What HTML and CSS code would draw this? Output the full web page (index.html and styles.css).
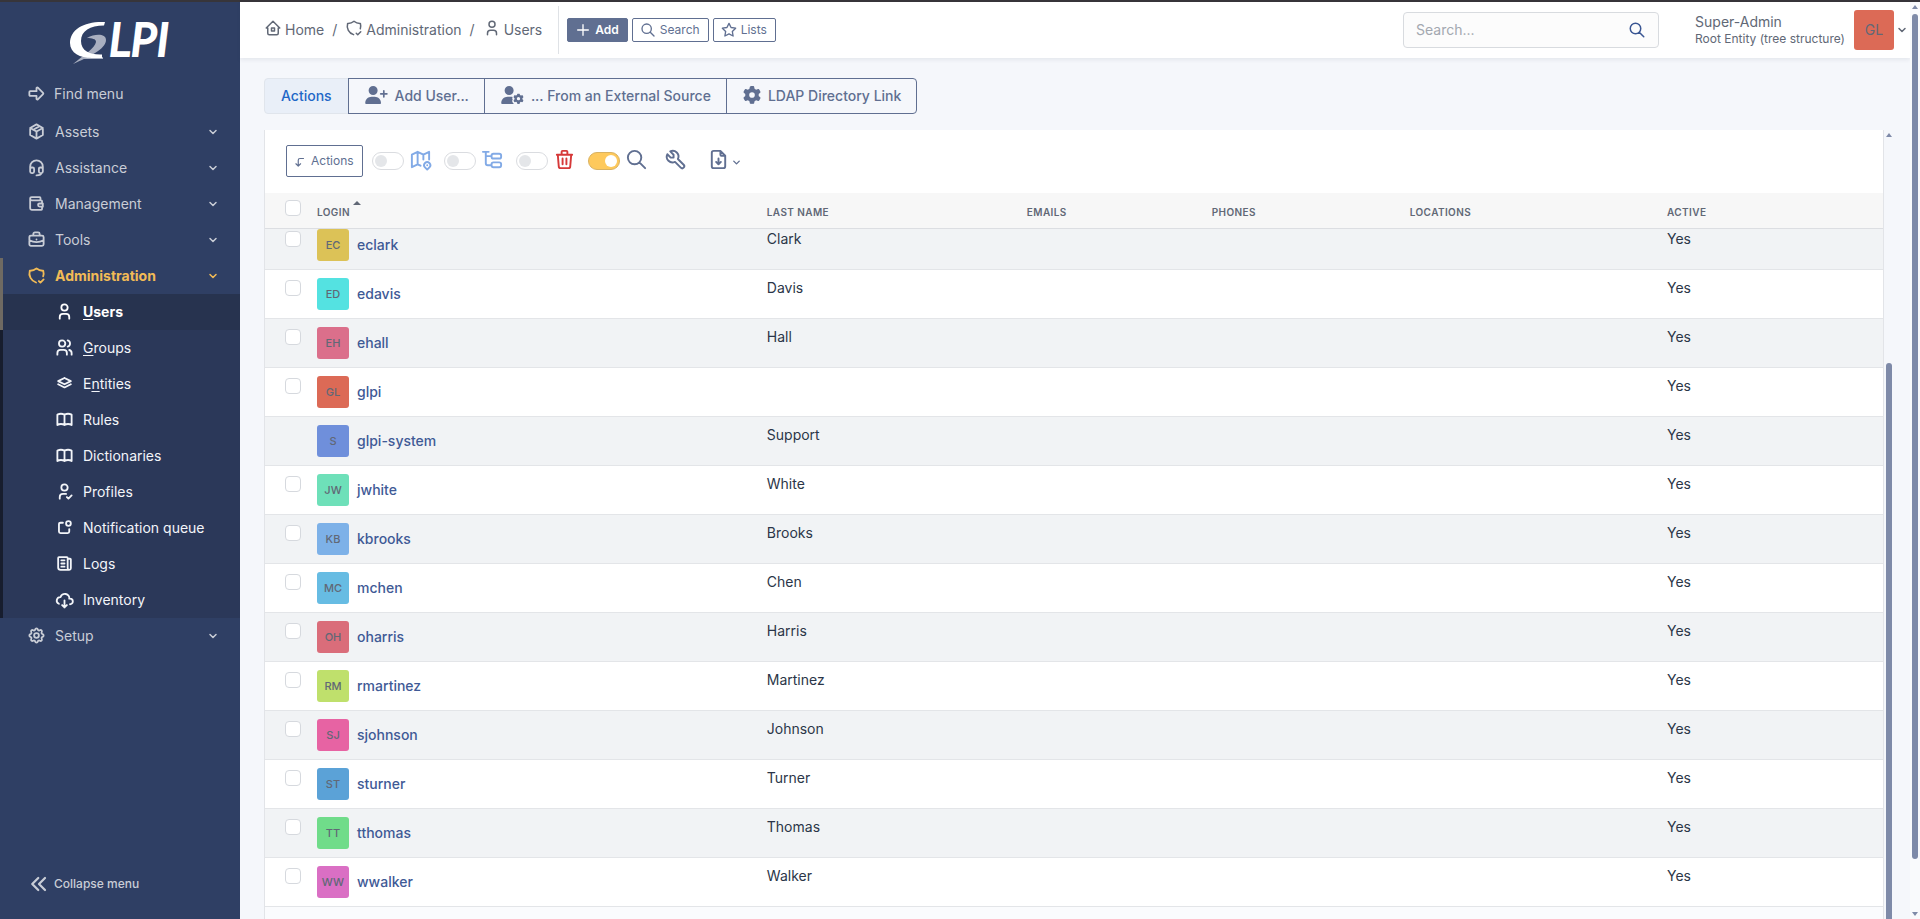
FILE: index.html
```html
<!DOCTYPE html>
<html lang="en">
<head>
<meta charset="utf-8">
<title>Users - GLPI</title>
<link rel="stylesheet" href="styles.css">
</head>
<body>
<svg class="sprite" aria-hidden="true">
  <symbol id="i-arrow" viewBox="0 0 24 24"><path d="M4 9h8v-3.586a1 1 0 0 1 1.707 -.707l6.586 6.586a1 1 0 0 1 0 1.414l-6.586 6.586a1 1 0 0 1 -1.707 -.707v-3.586h-8a1 1 0 0 1 -1 -1v-4a1 1 0 0 1 1 -1z"/></symbol>
  <symbol id="i-package" viewBox="0 0 24 24"><path d="M12 3l8 4.5v9l-8 4.5l-8 -4.5v-9l8 -4.5M12 12l8 -4.5M12 12v9M12 12l-8 -4.5M16 5.25l-8 4.5"/></symbol>
  <symbol id="i-headset" viewBox="0 0 24 24"><path d="M4 14v-3a8 8 0 1 1 16 0v3M18 19c0 1.657 -2.686 3 -6 3M4 14a2 2 0 0 1 2 -2h1a2 2 0 0 1 2 2v3a2 2 0 0 1 -2 2h-1a2 2 0 0 1 -2 -2v-3zM15 14a2 2 0 0 1 2 -2h1a2 2 0 0 1 2 2v3a2 2 0 0 1 -2 2h-1a2 2 0 0 1 -2 -2v-3z"/></symbol>
  <symbol id="i-wallet" viewBox="0 0 24 24"><path d="M17 8v-3a1 1 0 0 0 -1 -1h-10a2 2 0 0 0 0 4h12a1 1 0 0 1 1 1v3m0 4v3a1 1 0 0 1 -1 1h-12a2 2 0 0 1 -2 -2v-12M20 12v4h-4a2 2 0 0 1 0 -4h4"/></symbol>
  <symbol id="i-briefcase" viewBox="0 0 24 24"><path d="M3 9a2 2 0 0 1 2 -2h14a2 2 0 0 1 2 2v9a2 2 0 0 1 -2 2h-14a2 2 0 0 1 -2 -2zM8 7v-2a2 2 0 0 1 2 -2h4a2 2 0 0 1 2 2v2M12 12v.01M3 13a20 20 0 0 0 18 0"/></symbol>
  <symbol id="i-shield" viewBox="0 0 24 24"><path d="M11.46 20.846a12 12 0 0 1 -7.96 -14.846a12 12 0 0 0 8.5 -3a12 12 0 0 0 8.5 3a12 12 0 0 1 -.09 7.06M15 19l2 2l4 -4"/></symbol>
  <symbol id="i-user" viewBox="0 0 24 24"><path d="M8 7a4 4 0 1 0 8 0a4 4 0 0 0 -8 0M6 21v-2a4 4 0 0 1 4 -4h4a4 4 0 0 1 4 4v2"/></symbol>
  <symbol id="i-users" viewBox="0 0 24 24"><path d="M5 7a4 4 0 1 0 8 0a4 4 0 1 0 -8 0M3 21v-2a4 4 0 0 1 4 -4h4a4 4 0 0 1 4 4v2M16 3.13a4 4 0 0 1 0 7.75M21 21v-2a4 4 0 0 0 -3 -3.85"/></symbol>
  <symbol id="i-stack" viewBox="0 0 24 24"><path d="M12 5l-8 4l8 4l8 -4l-8 -4M4 13l8 4l8 -4"/></symbol>
  <symbol id="i-book" viewBox="0 0 24 24"><path d="M3 19a9 9 0 0 1 9 0a9 9 0 0 1 9 0M3 6a9 9 0 0 1 9 0a9 9 0 0 1 9 0M3 6v13M12 6v13M21 6v13"/></symbol>
  <symbol id="i-usercheck" viewBox="0 0 24 24"><path d="M8 7a4 4 0 1 0 8 0a4 4 0 0 0 -8 0M6 21v-2a4 4 0 0 1 4 -4h4M15 19l2 2l4 -4"/></symbol>
  <symbol id="i-notification" viewBox="0 0 24 24"><path d="M10 6h-3a2 2 0 0 0 -2 2v9a2 2 0 0 0 2 2h9a2 2 0 0 0 2 -2v-3M14 7a3 3 0 1 0 6 0a3 3 0 1 0 -6 0"/></symbol>
  <symbol id="i-news" viewBox="0 0 24 24"><path d="M16 6h3a1 1 0 0 1 1 1v11a2 2 0 0 1 -4 0v-13a1 1 0 0 0 -1 -1h-10a1 1 0 0 0 -1 1v12a3 3 0 0 0 3 3h11M8 8h4M8 12h4M8 16h4"/></symbol>
  <symbol id="i-cloud" viewBox="0 0 24 24"><path d="M19 18a3.5 3.5 0 0 0 0 -7h-1a5 4.5 0 0 0 -11 -2a4.6 4.4 0 0 0 -2.1 8.4M12 13v9M9 19l3 3l3 -3"/></symbol>
  <symbol id="i-settings" viewBox="0 0 24 24"><path d="M10.325 4.317c.426 -1.756 2.924 -1.756 3.35 0a1.724 1.724 0 0 0 2.573 1.066c1.543 -.94 3.31 .826 2.37 2.37a1.724 1.724 0 0 0 1.065 2.572c1.756 .426 1.756 2.924 0 3.35a1.724 1.724 0 0 0 -1.066 2.573c.94 1.543 -.826 3.31 -2.37 2.37a1.724 1.724 0 0 0 -2.572 1.065c-.426 1.756 -2.924 1.756 -3.35 0a1.724 1.724 0 0 0 -2.573 -1.066c-1.543 .94 -3.31 -.826 -2.37 -2.37a1.724 1.724 0 0 0 -1.065 -2.572c-1.756 -.426 -1.756 -2.924 0 -3.35a1.724 1.724 0 0 0 1.066 -2.573c-.94 -1.543 .826 -3.31 2.37 -2.37c1 .608 2.296 .07 2.572 -1.065zM9 12a3 3 0 1 0 6 0a3 3 0 0 0 -6 0"/></symbol>
  <symbol id="i-chevron" viewBox="0 0 24 24"><path d="M6 9l6 6l6 -6"/></symbol>
  <symbol id="i-collapse" viewBox="0 0 24 24"><path d="M11 4l-8 8l8 8M20 4l-8 8l8 8"/></symbol>
  <symbol id="i-home" viewBox="0 0 24 24"><path d="M5 12h-2l9 -9l9 9h-2v7a2 2 0 0 1 -2 2h-10a2 2 0 0 1 -2 -2v-7M10 12h4v4h-4z"/></symbol>
  <symbol id="i-plus" viewBox="0 0 24 24"><path d="M12 4v16M4 12h16"/></symbol>
  <symbol id="i-search" viewBox="0 0 24 24"><path d="M3 10a7 7 0 1 0 14 0a7 7 0 1 0 -14 0M21 21l-6 -6"/></symbol>
  <symbol id="i-star" viewBox="0 0 24 24"><path d="M12 17.75l-6.172 3.245l1.179 -6.873l-5 -4.867l6.9 -1l3.086 -6.253l3.086 6.253l6.9 1l-5 4.867l1.179 6.873z"/></symbol>
  <symbol id="i-cornerdown" viewBox="0 0 24 24"><path d="M18 6h-6a3 3 0 0 0 -3 3v10l-4 -4m8 0l-4 4"/></symbol>
  <symbol id="i-map" viewBox="0 0 24 24"><path d="M12 18.5l-3 -1.5l-6 3v-13l6 -3l6 3l6 -3v8M9 4v13M15 7v5M19 22.5l-2.3 -2.3a3.2 3.2 0 1 1 4.6 0zM19 18v.01"/></symbol>
  <symbol id="i-tree" viewBox="0 0 24 24"><path d="M2 4h6M5 4v12a2 2 0 0 0 2 2h4M5 8.5h6M11 8a2 2 0 0 1 2 -2h6a2 2 0 0 1 2 2v1a2 2 0 0 1 -2 2h-6a2 2 0 0 1 -2 -2zM11 17a2 2 0 0 1 2 -2h6a2 2 0 0 1 2 2v1a2 2 0 0 1 -2 2h-6a2 2 0 0 1 -2 -2z"/></symbol>
  <symbol id="i-trash" viewBox="0 0 24 24"><path d="M4 7h16M10 11v6M14 11v6M5 7l1 12a2 2 0 0 0 2 2h8a2 2 0 0 0 2 -2l1 -12M9 7v-3a1 1 0 0 1 1 -1h4a1 1 0 0 1 1 1v3"/></symbol>
  <symbol id="i-tool" viewBox="0 0 24 24"><path d="M7 10h3v-3l-3.5 -3.5a6 6 0 0 1 8 8l6 6a2 2 0 0 1 -3 3l-6 -6a6 6 0 0 1 -8 -8l3.5 3.5"/></symbol>
  <symbol id="i-file" viewBox="0 0 24 24"><path d="M14 3v4a1 1 0 0 0 1 1h4M17 21h-10a2 2 0 0 1 -2 -2v-14a2 2 0 0 1 2 -2h7l5 5v11a2 2 0 0 1 -2 2zM12 11v6M9.5 14.5l2.5 2.5l2.5 -2.5"/></symbol>
  <symbol id="i-gear" viewBox="0 0 512 512"><path d="M495.9 166.6c3.2 8.7 .5 18.4-6.4 24.6l-43.3 39.4c1.1 8.3 1.7 16.8 1.7 25.4s-.6 17.1-1.7 25.4l43.3 39.4c6.9 6.2 9.6 15.9 6.4 24.6c-4.4 11.9-9.7 23.3-15.8 34.3l-4.7 8.1c-6.6 11-14 21.4-22.1 31.2c-5.9 7.2-15.7 9.6-24.5 6.8l-55.7-17.7c-13.4 10.3-28.2 18.9-44 25.4l-12.5 57.1c-2 9.1-9 16.3-18.2 17.8c-13.8 2.3-28 3.5-42.5 3.5s-28.7-1.2-42.5-3.5c-9.2-1.5-16.2-8.7-18.2-17.8l-12.5-57.1c-15.8-6.5-30.6-15.1-44-25.4L83.1 425.9c-8.8 2.8-18.6 .3-24.5-6.8c-8.1-9.8-15.5-20.2-22.1-31.2l-4.7-8.1c-6.1-11-11.4-22.4-15.8-34.3c-3.2-8.7-.5-18.4 6.4-24.6l43.3-39.4C64.6 273.1 64 264.6 64 256s.6-17.1 1.7-25.4L22.4 191.2c-6.9-6.2-9.6-15.9-6.4-24.6c4.4-11.9 9.7-23.3 15.8-34.3l4.7-8.1c6.6-11 14-21.4 22.1-31.2c5.9-7.2 15.7-9.6 24.5-6.8l55.7 17.7c13.4-10.3 28.2-18.9 44-25.4l12.5-57.1c2-9.1 9-16.3 18.2-17.8C227.3 1.2 241.5 0 256 0s28.7 1.2 42.5 3.5c9.2 1.5 16.2 8.7 18.2 17.8l12.5 57.1c15.8 6.5 30.6 15.1 44 25.4l55.7-17.7c8.8-2.8 18.6-.3 24.5 6.8c8.1 9.8 15.5 20.2 22.1 31.2l4.7 8.1c6.1 11 11.4 22.4 15.8 34.3zM256 336a80 80 0 1 0 0-160 80 80 0 1 0 0 160z"/></symbol>
  <symbol id="i-userplus" viewBox="0 0 640 512"><path d="M96 128a128 128 0 1 1 256 0A128 128 0 1 1 96 128zM0 482.3C0 383.8 79.8 304 178.3 304h91.4C368.2 304 448 383.8 448 482.3c0 16.4-13.3 29.7-29.7 29.7H29.7C13.3 512 0 498.7 0 482.3zM504 312V248H440c-13.3 0-24-10.7-24-24s10.7-24 24-24h64V136c0-13.3 10.7-24 24-24s24 10.7 24 24v64h64c13.3 0 24 10.7 24 24s-10.7 24-24 24H552v64c0 13.3-10.7 24-24 24s-24-10.7-24-24z"/></symbol>
  <symbol id="i-usergear" viewBox="0 0 640 512"><path d="M96 128a128 128 0 1 1 256 0A128 128 0 1 1 96 128zM0 482.3C0 383.8 79.8 304 178.3 304h91.4c20 0 39 3 57 9c-20 25-20 45 0 65c-30 50-10 95 35 134H29.7C13.3 512 0 498.7 0 482.3z"/><use href="#i-gear" x="340" y="212" width="300" height="300"/></symbol>
</svg>

<div class="topline"></div>
<div class="app">
  <aside class="sidebar">
    <a class="logo" href="#" aria-label="GLPI">
      <svg viewBox="0 -12 124 66" width="124" height="66">
        <path class="swoosh" d="M18 17C26 12.5 37 12.5 37 19C37 28 20 36 4 43C15 34 26 27 27 21C27 17.5 23 17.5 18 17zM15 35C22 37.5 28 37.5 34 36V38H15z"/>
        <path class="g" d="M36 1C16 0 1 8 1 22C1 32 11 37 23 37H33V33.5C21 34 12 30 12 20C12 10 21 4.5 35 4.5z"/>
        <text x="40" y="35">LPI</text>
      </svg>
    </a>
    <nav class="menu">
      <a class="item find" href="#"><svg class="icon"><use href="#i-arrow"/></svg><span>Find menu</span></a>
      <a class="item" href="#"><svg class="icon"><use href="#i-package"/></svg><span>Assets</span><svg class="icon chev"><use href="#i-chevron"/></svg></a>
      <a class="item" href="#"><svg class="icon"><use href="#i-headset"/></svg><span>Assistance</span><svg class="icon chev"><use href="#i-chevron"/></svg></a>
      <a class="item" href="#"><svg class="icon"><use href="#i-wallet"/></svg><span>Management</span><svg class="icon chev"><use href="#i-chevron"/></svg></a>
      <a class="item" href="#"><svg class="icon"><use href="#i-briefcase"/></svg><span>Tools</span><svg class="icon chev"><use href="#i-chevron"/></svg></a>
      <a class="item current" href="#"><svg class="icon"><use href="#i-shield"/></svg><span>Administration</span><svg class="icon chev"><use href="#i-chevron"/></svg></a>
      <div class="submenu">
        <a class="sub active" href="#"><svg class="icon"><use href="#i-user"/></svg><span><u>U</u>sers</span></a>
        <a class="sub" href="#"><svg class="icon"><use href="#i-users"/></svg><span><u>G</u>roups</span></a>
        <a class="sub" href="#"><svg class="icon"><use href="#i-stack"/></svg><span>E<u>n</u>tities</span></a>
        <a class="sub" href="#"><svg class="icon"><use href="#i-book"/></svg><span>Rules</span></a>
        <a class="sub" href="#"><svg class="icon"><use href="#i-book"/></svg><span>Dictionaries</span></a>
        <a class="sub" href="#"><svg class="icon"><use href="#i-usercheck"/></svg><span>Profiles</span></a>
        <a class="sub" href="#"><svg class="icon"><use href="#i-notification"/></svg><span>Notification queue</span></a>
        <a class="sub" href="#"><svg class="icon"><use href="#i-news"/></svg><span>Logs</span></a>
        <a class="sub" href="#"><svg class="icon"><use href="#i-cloud"/></svg><span>Inventory</span></a>
      </div>
      <a class="item" href="#"><svg class="icon"><use href="#i-settings"/></svg><span>Setup</span><svg class="icon chev"><use href="#i-chevron"/></svg></a>
    </nav>
    <button class="collapse" type="button"><svg class="icon"><use href="#i-collapse"/></svg><span>Collapse menu</span></button>
  </aside>

  <div class="page">
    <header class="header">
      <nav class="crumbs" aria-label="Breadcrumb">
        <a href="#"><svg class="icon"><use href="#i-home"/></svg>Home</a>
        <span>/</span>
        <a href="#"><svg class="icon"><use href="#i-shield"/></svg>Administration</a>
        <span>/</span>
        <a href="#"><svg class="icon"><use href="#i-user"/></svg>Users</a>
      </nav>
      <div class="quick">
        <button class="btn primary" type="button"><svg class="icon"><use href="#i-plus"/></svg>Add</button>
        <button class="btn" type="button"><svg class="icon"><use href="#i-search"/></svg>Search</button>
        <button class="btn" type="button"><svg class="icon"><use href="#i-star"/></svg>Lists</button>
      </div>
      <form class="search">
        <input type="text" placeholder="Search..." aria-label="Search">
        <button type="button" aria-label="Search"><svg class="icon"><use href="#i-search"/></svg></button>
      </form>
      <button class="account" type="button">
        <span class="who"><span class="profile">Super-Admin</span><span class="entity">Root Entity (tree structure)</span></span>
        <span class="avatar large">GL</span>
        <svg class="icon chev"><use href="#i-chevron"/></svg>
      </button>
    </header>

    <main class="content">
      <div class="tabs">
        <span class="tab label">Actions</span>
        <a class="tab" href="#"><svg class="solid wide"><use href="#i-userplus"/></svg>Add User...</a>
        <a class="tab" href="#"><svg class="solid wide"><use href="#i-usergear"/></svg>... From an External Source</a>
        <a class="tab" href="#"><svg class="solid"><use href="#i-gear"/></svg>LDAP Directory Link</a>
      </div>

      <div class="results">
        <section class="card">
          <div class="toolbar">
            <button class="btn actions" type="button"><svg class="icon"><use href="#i-cornerdown"/></svg>Actions</button>
            <label class="toggle blue"><input type="checkbox" aria-label="Show as map"><svg class="icon"><use href="#i-map"/></svg></label>
            <label class="toggle blue"><input type="checkbox" aria-label="Browse"><svg class="icon"><use href="#i-tree"/></svg></label>
            <label class="toggle red"><input type="checkbox" aria-label="Show the trashbin"><svg class="icon"><use href="#i-trash"/></svg></label>
            <label class="toggle"><input type="checkbox" aria-label="Search" checked><svg class="icon"><use href="#i-search"/></svg></label>
            <button class="tool" type="button" aria-label="Columns"><svg class="icon"><use href="#i-tool"/></svg></button>
            <button class="tool" type="button" aria-label="Export"><svg class="icon"><use href="#i-file"/></svg><svg class="icon chev"><use href="#i-chevron"/></svg></button>
          </div>
          <table class="users">
            <colgroup><col class="c-check"><col class="c-login"><col class="c-name"><col class="c-mail"><col class="c-phone"><col class="c-loc"><col></colgroup>
            <thead>
              <tr><th><input class="check" type="checkbox" aria-label="Check all"></th><th class="sorted">Login<svg class="sort" viewBox="0 0 8 4"><path d="M4 0L8 4H0z"/></svg></th><th>Last name</th><th>Emails</th><th>Phones</th><th>Locations</th><th>Active</th></tr>
            </thead>
            <tbody>
              <tr><td><input class="check" type="checkbox" aria-label="eclark"></td><td><a href="#"><span class="avatar" style="background:#dcc257">EC</span>eclark</a></td><td>Clark</td><td></td><td></td><td></td><td>Yes</td></tr>
              <tr><td><input class="check" type="checkbox" aria-label="edavis"></td><td><a href="#"><span class="avatar" style="background:#54e2e1">ED</span>edavis</a></td><td>Davis</td><td></td><td></td><td></td><td>Yes</td></tr>
              <tr><td><input class="check" type="checkbox" aria-label="ehall"></td><td><a href="#"><span class="avatar" style="background:#db6f8b">EH</span>ehall</a></td><td>Hall</td><td></td><td></td><td></td><td>Yes</td></tr>
              <tr><td><input class="check" type="checkbox" aria-label="glpi"></td><td><a href="#"><span class="avatar" style="background:#dc6a56">GL</span>glpi</a></td><td></td><td></td><td></td><td></td><td>Yes</td></tr>
              <tr><td></td><td><a href="#"><span class="avatar" style="background:#6f8fdb">S</span>glpi-system</a></td><td>Support</td><td></td><td></td><td></td><td>Yes</td></tr>
              <tr><td><input class="check" type="checkbox" aria-label="jwhite"></td><td><a href="#"><span class="avatar" style="background:#6ee0b9">JW</span>jwhite</a></td><td>White</td><td></td><td></td><td></td><td>Yes</td></tr>
              <tr><td><input class="check" type="checkbox" aria-label="kbrooks"></td><td><a href="#"><span class="avatar" style="background:#7db1e8">KB</span>kbrooks</a></td><td>Brooks</td><td></td><td></td><td></td><td>Yes</td></tr>
              <tr><td><input class="check" type="checkbox" aria-label="mchen"></td><td><a href="#"><span class="avatar" style="background:#67bce3">MC</span>mchen</a></td><td>Chen</td><td></td><td></td><td></td><td>Yes</td></tr>
              <tr><td><input class="check" type="checkbox" aria-label="oharris"></td><td><a href="#"><span class="avatar" style="background:#da6d7a">OH</span>oharris</a></td><td>Harris</td><td></td><td></td><td></td><td>Yes</td></tr>
              <tr><td><input class="check" type="checkbox" aria-label="rmartinez"></td><td><a href="#"><span class="avatar" style="background:#bfe06c">RM</span>rmartinez</a></td><td>Martinez</td><td></td><td></td><td></td><td>Yes</td></tr>
              <tr><td><input class="check" type="checkbox" aria-label="sjohnson"></td><td><a href="#"><span class="avatar" style="background:#e763a3">SJ</span>sjohnson</a></td><td>Johnson</td><td></td><td></td><td></td><td>Yes</td></tr>
              <tr><td><input class="check" type="checkbox" aria-label="sturner"></td><td><a href="#"><span class="avatar" style="background:#5ba2d7">ST</span>sturner</a></td><td>Turner</td><td></td><td></td><td></td><td>Yes</td></tr>
              <tr><td><input class="check" type="checkbox" aria-label="tthomas"></td><td><a href="#"><span class="avatar" style="background:#70dc8a">TT</span>tthomas</a></td><td>Thomas</td><td></td><td></td><td></td><td>Yes</td></tr>
              <tr><td><input class="check" type="checkbox" aria-label="wwalker"></td><td><a href="#"><span class="avatar" style="background:#da6fc4">WW</span>wwalker</a></td><td>Walker</td><td></td><td></td><td></td><td>Yes</td></tr>
            </tbody>
          </table>
          <div class="card-foot"></div>
        </section>
        <div class="scroll inner"><svg class="tri" viewBox="0 0 6 4"><path d="M3 0L6 4H0z"/></svg><span class="thumb"></span></div>
      </div>
    </main>
  </div>
  <div class="scroll outer"><svg class="tri" viewBox="0 0 6 4"><path d="M3 0L6 4H0z"/></svg><span class="thumb"></span><svg class="tri" viewBox="0 0 6 4"><path d="M0 0H6L3 4z"/></svg></div>
</div>
</body>
</html>
```
FILE: styles.css
```css
* { box-sizing: border-box; }

body {
  margin: 0;
  height: 100vh;
  overflow: hidden;
  display: flex;
  flex-direction: column;
  background: #f5f7fb;
  color: #2b3648;
  font: 14px/20px Inter, "Liberation Sans", sans-serif;
}

a { color: inherit; text-decoration: none; }
button { font: inherit; color: inherit; background: none; border: 0; padding: 0; }

.sprite { position: absolute; width: 0; height: 0; }
.topline { flex: none; height: 2px; background: #37353a; }
.app { flex: 1; min-height: 0; display: flex; }

.icon {
  flex: none;
  width: 18px;
  height: 18px;
  fill: none;
  stroke: currentColor;
  stroke-width: 2;
  stroke-linecap: round;
  stroke-linejoin: round;
}
.solid { flex: none; width: 18px; height: 18px; fill: currentColor; }
.solid.wide { width: 23px; }
.icon.chev { width: 12px; height: 12px; stroke-width: 3; }

/* Sidebar */
.sidebar {
  flex: none;
  width: 240px;
  display: flex;
  flex-direction: column;
  background: #2f3f64;
  color: #c9cdd6;
}
.logo { display: flex; padding: 7px 0 1px 69px; }
.logo .g { fill: #fff; }
.logo .swoosh { fill: #a9afc0; }
.logo text { fill: #fff; stroke: #fff; stroke-width: 2px; font: italic 400 46px Lato, sans-serif; }
.menu { flex: 1; }
.item { display: flex; align-items: center; gap: 9px; height: 36px; padding: 0 21px 0 27px; }
.item .icon:first-child, .sub .icon { width: 19px; height: 19px; margin-bottom: 2px; stroke-width: 2.3; }
.item .chev { margin-left: auto; }
.item.find { height: 38px; padding-bottom: 2px; gap: 8px; }
.item.current { color: #f2bb56; font-weight: 700; border-left: 3px solid #6f6a62; padding-left: 24px; }
.submenu { background: #2b3859; color: #f3f5f9; }
.sub { display: flex; align-items: center; gap: 9px; height: 36px; padding-left: 52px; border-left: 3px solid #171d2e; }
.sub.active { background: #27334f; border-left-color: #6f6a62; color: #fff; font-weight: 700; }
.sub u { text-underline-offset: 2px; }
.collapse { display: flex; align-items: center; gap: 6px; padding: 0 30px 25px; font-size: 12px; font-weight: 500; }
.collapse .icon { stroke-width: 3; }

/* Header */
.page { flex: 1; min-width: 0; display: flex; flex-direction: column; }
.header {
  flex: none;
  height: 56px;
  display: flex;
  align-items: center;
  padding-right: 2px;
  background: #fff;
  color: #616876;
  box-shadow: 0 2px 4px rgba(40, 50, 80, .08);
}
.crumbs {
  display: flex;
  align-items: center;
  gap: 8px;
  height: 48px;
  padding: 0 16px 0 24px;
  border-right: 1px solid #dfe2e6;
}
.crumbs a { display: flex; align-items: center; gap: 3px; }
.crumbs .icon { margin-bottom: 4px; }
.quick { display: flex; gap: 4px; padding-left: 8px; }
.btn {
  display: flex;
  align-items: center;
  gap: 4px;
  height: 24px;
  padding: 0 8px 0 7px;
  border: 1px solid #606f91;
  border-radius: 2px;
  color: #606f91;
  font-size: 12px;
}
.btn .icon { width: 16px; height: 16px; }
.btn.primary { background: #606f91; color: #fff; font-weight: 600; }
.search {
  display: flex;
  align-items: center;
  width: 256px;
  height: 36px;
  margin: 0 36px 0 auto;
  padding: 0 12px;
  border: 1px solid #d8dbdf;
  border-radius: 4px;
  background: #fcfcfc;
}
.search input { flex: 1; min-width: 0; border: 0; padding: 0; background: none; font: inherit; }
.search input::placeholder { color: #a3a8b0; opacity: 1; }
.search button { display: flex; color: #3a5693; }
.account { display: flex; align-items: center; gap: 9px; text-align: left; }
.account .chev { margin-left: -7px; }
.who { display: flex; flex-direction: column; }
.profile { line-height: 18px; }
.entity { font-size: 12px; line-height: 16px; }

.avatar {
  display: inline-flex;
  align-items: center;
  justify-content: center;
  width: 32px;
  height: 32px;
  border-radius: 3px;
  color: #616876;
  font-size: 11px;
  font-weight: 500;
}
.avatar.large { width: 40px; height: 40px; background: #dc6a56; font-size: 14px; font-weight: 400; }

/* Content */
.content { flex: 1; min-height: 0; display: flex; flex-direction: column; padding: 20px 16px 0 24px; }
.tabs { display: flex; margin-bottom: 16px; }
.tab {
  display: flex;
  align-items: center;
  gap: 7px;
  height: 36px;
  margin-left: -1px;
  padding: 0 15px 0 16px;
  border: 1px solid #606f91;
  color: #606f91;
  font-weight: 500;
}
.tab:last-child { border-radius: 0 4px 4px 0; }
.tab.label { margin-left: 0; padding-right: 16px; background: #e9eff8; border-color: #e0e5ec; border-radius: 4px 0 0 4px; color: #1f67c7; }
.tab .solid { margin-bottom: 2px; }

.results { flex: 1; min-height: 0; display: flex; overflow: hidden; }
.card {
  flex: 1;
  min-width: 0;
  display: flex;
  flex-direction: column;
  border: solid #e2e4e8;
  border-width: 0 1px;
  background: #fff;
}
.card-foot { flex: 1; background: #fafbfd; }

.toolbar { display: flex; align-items: center; height: 63px; padding: 0 21px 1px; color: #606f91; }
.btn.actions { height: 32px; padding: 0 8px 0 6px; margin-right: 9px; }
.btn.actions .icon { width: 14px; height: 14px; margin-top: 2px; }
.toggle { display: flex; align-items: center; gap: 5px; margin-right: 12px; }
.toggle .icon, .tool .icon:first-child { width: 23px; height: 23px; margin-bottom: 3px; }
.toggle.blue { color: #82aae6; }
.toggle.red { color: #d63939; }
.toggle input {
  appearance: none;
  display: flex;
  align-items: center;
  width: 32px;
  height: 18px;
  margin: 0;
  padding: 0 2px;
  border: 1px solid #dadce0;
  border-radius: 9px;
  background: #fff;
}
.toggle input::before { content: ""; width: 12px; height: 12px; border-radius: 6px; background: #e4e6e9; }
.toggle input:checked { justify-content: flex-end; border-color: #d9b262; background: #fec95c; }
.toggle input:checked::before { background: #fff; }
.tool { display: flex; align-items: center; gap: 1px; margin: 0 16px 0 4px; }
.tool .icon.chev { width: 11px; height: 11px; margin-top: 2px; }

.users { width: 100%; table-layout: fixed; border-collapse: separate; border-spacing: 0; }
.c-check { width: 44px; }
.c-login { width: 27.8%; }
.c-name { width: 16.07%; }
.c-mail { width: 11.43%; }
.c-phone { width: 12.24%; }
.c-loc { width: 15.9%; }
.users th {
  height: 36px;
  padding: 2px 8px 0;
  background: #f7f7f7;
  border-bottom: 1px solid #dcdee2;
  color: #616876;
  font-size: 10px;
  font-weight: 600;
  line-height: 16px;
  text-align: left;
  text-transform: uppercase;
  letter-spacing: .4px;
}
.sort { width: 8px; height: 4px; margin: -8px 0 0 3px; vertical-align: 11px; fill: #616876; }
.users td { padding: 8px 8px; border-bottom: 1px solid #e3e5e8; vertical-align: top; }
.users tbody tr:first-child td { padding-top: 0; }
.users tbody tr:nth-child(odd) { background: #f1f3f5; }
.users td:first-child, .users th:first-child { padding-left: 20px; }
.users td a { display: flex; align-items: center; gap: 8px; color: #3f5a96; font-weight: 500; }
.check {
  appearance: none;
  display: block;
  width: 16px;
  height: 16px;
  margin: 2px 0 0;
  border: 1px solid #d6d9de;
  border-radius: 4px;
  background: #fff;
}
.users th .check { margin: 0 0 8px; }

/* Scrollbars */
.scroll { flex: none; display: flex; flex-direction: column; align-items: center; width: 10px; }
.tri { flex: none; width: 6px; height: 4px; fill: #7e8aa8; }
.thumb { width: 6px; border-radius: 3px; background: #7e8aa8; }
.scroll.inner { padding-top: 3px; }
.inner .thumb { flex: 1; margin-top: 226px; border-radius: 3px 3px 0 0; }
.scroll.outer { padding: 3px 0; background: #f9fafc; }
.outer .thumb { flex: 1; margin: 5px 0 53px; }
```
